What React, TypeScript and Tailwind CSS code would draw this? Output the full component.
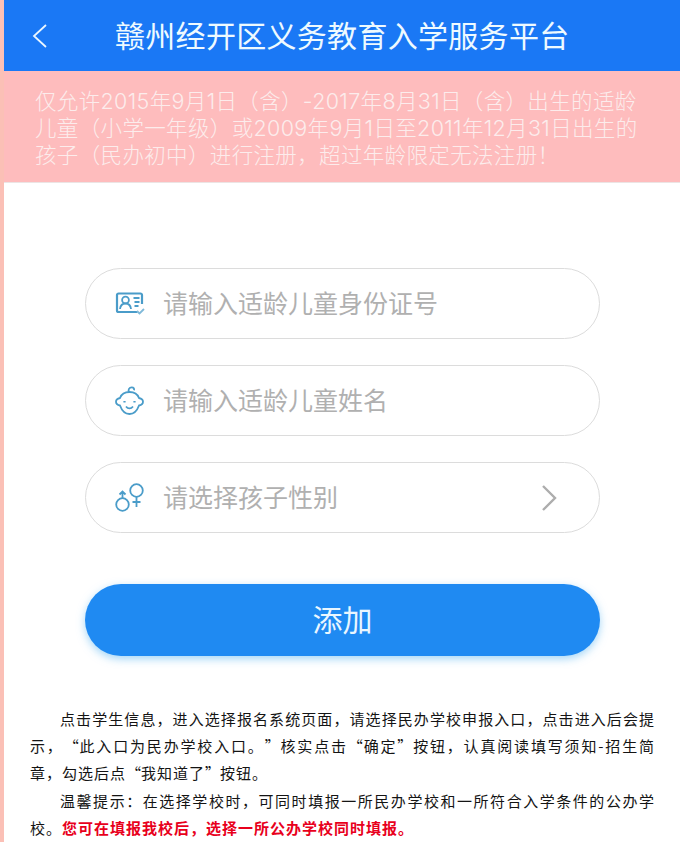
import React from "react";

const cjk = "font-['Noto_Sans_CJK_SC','Liberation_Sans',sans-serif]";

function IdIcon() {
  return (
    <svg width="31" height="24" viewBox="0 0 30 24" fill="none" stroke="#4a9cc9" strokeWidth="1.8" className="shrink-0">
      <path d="M22 20H3a1.500 1.500 0 0 1-1.500-1.500V3A1.500 1.500 0 0 1 3 1.500h22A1.500 1.500 0 0 1 26.500 3v9" strokeWidth="2.200" />
      <circle cx="10" cy="8" r="3.400" />
      <path d="M4.500 17c.4-3.500 2.600-5.500 5.500-5.500s5.100 2 5.500 5.500" />
      <path d="M18 6h6M19 10h5M19 14h4" />
      <path d="M21.500 19l2.500 2.500 4.500-4.500" stroke="#7fb9d9" />
    </svg>
  );
}

function BabyIcon() {
  return (
    <svg width="29" height="30" viewBox="0 0 29 30" fill="none" stroke="#4a9cc9" strokeWidth="1.800" className="shrink-0">
      <path d="M5 12C6.500 8 10 6 14.500 6c4.500 0 8 2 9.500 6 2.800.6 4 2 4 3.700s-1.200 3.200-4 3.800C22.200 24.500 18.800 28 14.500 28S6.800 24.500 5 19.500c-2.800-.6-4-2.100-4-3.800S2.200 12.600 5 12z" />
      <path d="M14 6c-1.200-2.200.2-4.700 2.700-4.700 2 0 3 1.700 2.100 3" />
      <path d="M9.500 15v1.500M19.500 15v1.500" strokeWidth="2.200" />
      <path d="M11 20.500c1 1.300 2.200 1.900 3.500 1.900s2.500-.6 3.500-1.900" />
    </svg>
  );
}

function GenderIcon() {
  return (
    <svg width="30" height="30" viewBox="0 0 30 30" fill="none" stroke="#4a9cc9" strokeWidth="1.800" className="shrink-0">
      <circle cx="7.500" cy="21.500" r="6.300" />
      <path d="M7.500 15V8.500M4.500 11.500l3-3 3 3" />
      <circle cx="21.500" cy="7.500" r="6.300" />
      <path d="M21.500 14v10M17.500 19h8" />
    </svg>
  );
}

function Field({ icon, text, arrow }: { icon: React.ReactNode; text: string; arrow?: boolean }) {
  return (
    <div className="flex h-[71px] items-center rounded-[36px] border border-[#dcdcdc] bg-white pl-[29px] pr-[41px]">
      <div className="flex w-[48px] shrink-0 items-center">{icon}</div>
      <span className="pb-[3px] text-[25px] leading-none text-[#b0b0b0]">{text}</span>
      {arrow && (
        <svg width="18" height="28" viewBox="0 0 18 28" fill="none" stroke="#adadad" strokeWidth="2.400" className="ml-auto">
          <path d="M3 2l12 12L3 26" />
        </svg>
      )}
    </div>
  );
}

function Open() {
  return <span className="inline-block w-[15px] indent-0 text-right">“</span>;
}

function Close() {
  return <span className="inline-block w-[15px] indent-0 text-left">”</span>;
}

export default function App() {
  return (
    <div className={`h-[842px] w-[681px] overflow-hidden bg-white ${cjk}`}>
      <div className="h-full w-[680px] border-l-[4px] border-[#fbc0b6]">
        <header className="flex h-[71px] items-center bg-[#1a78f5] pl-[28px]">
          <svg width="16" height="26" viewBox="0 0 16 26" fill="none" stroke="#eaf6ff" strokeWidth="1.800" className="shrink-0">
            <path d="M14 2L2 13l12 11" />
          </svg>
          <h1 className="ml-[67px] pb-[4px] text-[30px] font-normal leading-none tracking-[0.3px] whitespace-nowrap text-[#eefaff]">
            赣州经开区义务教育入学服务平台
          </h1>
        </header>

        <section className="h-[112px] border-b border-[#ece4e4] bg-[#febcbd] pl-[31px] pt-[17px] font-['Inter','Noto_Sans_CJK_SC',sans-serif] text-[21.5px] font-light leading-[27px] tracking-[0.35px] text-[#fcecec]">
          <p className="whitespace-nowrap">仅允许2015年9月1日（含）-2017年8月31日（含）出生的适龄</p>
          <p className="whitespace-nowrap">儿童（小学一年级）或2009年9月1日至2011年12月31日出生的</p>
          <p className="whitespace-nowrap">孩子（民办初中）进行注册，超过年龄限定无法注册！</p>
        </section>

        <main className="mx-[81px] mt-[85px] w-[515px]">
          <div className="flex flex-col gap-[26px]">
            <Field icon={<IdIcon />} text="请输入适龄儿童身份证号" />
            <Field icon={<BabyIcon />} text="请输入适龄儿童姓名" />
            <Field icon={<GenderIcon />} text="请选择孩子性别" arrow />
          </div>
          <button className="mt-[51px] flex h-[72px] w-full items-center justify-center rounded-[36px] bg-[#1f8af2] pb-[3px] text-[30px] text-[#e9f6ff] shadow-[0_3px_8px_rgba(90,180,240,0.55)]">
            添加
          </button>
        </main>

        <section className="ml-[26px] mr-[25px] mt-[49px] text-[15px] leading-[27.2px] tracking-[1px] text-justify text-[#141414]">
          <p className="indent-[30px]">
            点击学生信息，进入选择报名系统页面，请选择民办学校申报入口，点击进入后会提示，<Open />此入口为民办学校入口。<Close />核实点击<Open />确定<Close />按钮，认真阅读填写须知-招生简章，勾选后点<Open />我知道了<Close />按钮。
          </p>
          <p className="indent-[30px]">
            温馨提示：在选择学校时，可同时填报一所民办学校和一所符合入学条件的公办学校。
            <strong className="font-bold text-[#e8001c]">您可在填报我校后，选择一所公办学校同时填报。</strong>
          </p>
        </section>
      </div>
    </div>
  );
}
